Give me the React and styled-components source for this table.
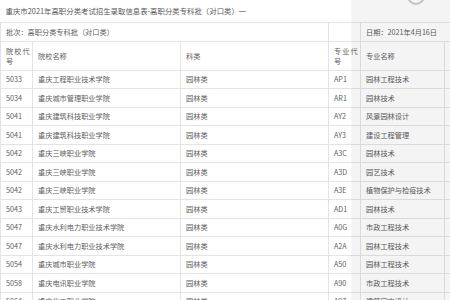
import React from 'react';
import styled, { createGlobalStyle } from 'styled-components';

const GlobalStyle = createGlobalStyle`
  html, body {
    margin: 0;
    padding: 0;
    background: #fff;
    overflow: hidden;
  }
  body {
    font-family: "Noto Sans CJK SC", "Noto Sans", sans-serif;
  }
`;

const Page = styled.div`
  position: relative;
  width: 450px;
  height: 300px;
  overflow: hidden;
  background: #fff;
`;

const Sheet = styled.table`
  border-collapse: collapse;
  table-layout: fixed;
  width: 470px;
  font-size: 7.2px;
  color: #606060;
  td {
    border: 1px solid #e4e4e4;
    padding: 0 0 0 5px;
    white-space: nowrap;
    overflow: hidden;
    vertical-align: middle;
  }
`;

const Col = styled.col`
  width: ${props => props.$w}px;
`;

const TitleRow = styled.tr`
  height: 22px;
  td {
    border-left: none;
    border-right: none;
    border-top: none;
    font-size: 7.4px;
    color: #585858;
  }
`;

const InfoRow = styled.tr`
  height: 19px;
`;

const HeadRow = styled.tr`
  height: 29px;
  td {
    line-height: 10px;
  }
`;

const Wrap = styled.td`
  && {
    white-space: normal;
    word-break: break-all;
    letter-spacing: 1px;
    padding-right: 0;
  }
`;

const Accent = styled.td`
  && {
    color: #d79a3c;
  }
`;

const DataRow = styled.tr`
  height: 18.5px;
`;

const Overlay = styled.div`
  position: absolute;
  top: 0;
  left: 352px;
  width: 98px;
  height: 300px;
  background: rgba(0, 0, 0, 0.045);
  box-shadow: -1px 0 1px rgba(0, 0, 0, 0.03);
`;

const Ring = styled.div`
  position: absolute;
  top: -13px;
  left: 55px;
  width: 14px;
  height: 14px;
  border: 2px solid #c2c2c2;
  border-radius: 50%;
`;

const widths = [32, 148, 148, 32, 84, 26];

const rows = [
  ['5033', '重庆工程职业技术学院', 'AP1', '园林工程技术', '3'],
  ['5034', '重庆城市管理职业学院', 'AR1', '园林技术', '5'],
  ['5041', '重庆建筑科技职业学院', 'AY2', '风景园林设计', '4'],
  ['5041', '重庆建筑科技职业学院', 'AY3', '建设工程管理', '3'],
  ['5042', '重庆三峡职业学院', 'A3C', '园林技术', '5'],
  ['5042', '重庆三峡职业学院', 'A3D', '园艺技术', '5'],
  ['5042', '重庆三峡职业学院', 'A3E', '植物保护与检疫技术', '5'],
  ['5043', '重庆工贸职业技术学院', 'AD1', '园林技术', '4'],
  ['5047', '重庆水利电力职业技术学院', 'A0G', '市政工程技术', '3'],
  ['5047', '重庆水利电力职业技术学院', 'A2A', '园林工程技术', '3'],
  ['5054', '重庆城市职业学院', 'A50', '园林工程技术', '4'],
  ['5058', '重庆电讯职业学院', 'A90', '市政工程技术', '3'],
  ['5064', '重庆化工职业学院', 'A97', '建筑室内设计', '3'],
];

const App = () => {
  return (
    <Page>
      <GlobalStyle />
      <Sheet>
        <colgroup>
          {widths.map((w, i) => (
            <Col key={i} $w={w} />
          ))}
        </colgroup>
        <tbody>
          <TitleRow>
            <td colSpan={6}>重庆市2021年高职分类考试招生录取信息表-高职分类专科批（对口类）一</td>
          </TitleRow>
          <InfoRow>
            <td colSpan={3}>批次：高职分类专科批（对口类）</td>
            <td />
            <td colSpan={2}>日期：2021年4月16日</td>
          </InfoRow>
          <HeadRow>
            <Wrap>院校代号</Wrap>
            <td>院校名称</td>
            <td>科类</td>
            <Wrap>专业代号</Wrap>
            <td>专业名称</td>
            <Accent>计划</Accent>
          </HeadRow>
          {rows.map((r, i) => (
            <DataRow key={i}>
              <td>{r[0]}</td>
              <td>{r[1]}</td>
              <td>园林类</td>
              <td>{r[2]}</td>
              <td>{r[3]}</td>
              <td>{r[4]}</td>
            </DataRow>
          ))}
        </tbody>
      </Sheet>
      <Overlay>
        <Ring />
      </Overlay>
    </Page>
  );
};

export default App;
